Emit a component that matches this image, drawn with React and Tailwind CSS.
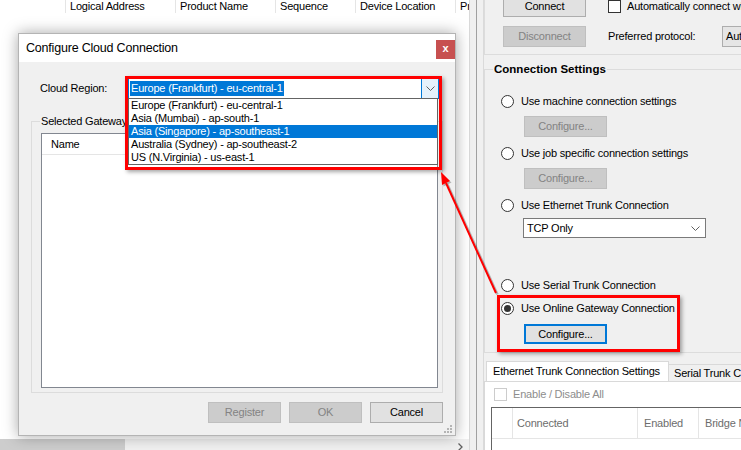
import React from 'react';

const Chevron = ({ color = '#606060' }) => (
  <svg width="9" height="5" viewBox="0 0 9 5">
    <path d="M0.5 0.5L4.5 4.5L8.5 0.5" fill="none" stroke={color} strokeWidth="1" />
  </svg>
);

const Radio = ({ checked }) => (
  <span className="flex h-[13px] w-[13px] shrink-0 items-center justify-center rounded-full border border-[#333333] bg-white">
    {checked && <span className="h-[7px] w-[7px] rounded-full bg-[#333333]" />}
  </span>
);

const RadioRow = ({ checked, label, className }) => (
  <div className={'flex h-[16px] items-center pl-[16px] ' + (className || '')}>
    <Radio checked={checked} />
    <span className="ml-[7px]">{label}</span>
  </div>
);

const WinButton = ({ children, kind, className }) => {
  let look = 'border border-[#adadad] bg-[#e1e1e1] text-black';
  if (kind === 'disabled') look = 'border border-[#bfbfbf] bg-[#cccccc] text-[#838383]';
  if (kind === 'focused') look = 'border-2 border-[#0078d7] bg-[#e1e1e1] text-black';
  return (
    <div className={'flex shrink-0 items-center justify-center ' + look + ' ' + (className || '')}>
      {children}
    </div>
  );
};

const regions = [
  'Europe (Frankfurt) - eu-central-1',
  'Asia (Mumbai) - ap-south-1',
  'Asia (Singapore) - ap-southeast-1',
  'Australia (Sydney) - ap-southeast-2',
  'US (N.Virginia) - us-east-1',
];

export default function App() {
  return (
    <div className="relative h-[450px] w-[741px] overflow-hidden bg-white font-['Liberation_Sans',Arial,sans-serif] text-[11px] tracking-[-0.2px] text-black">
      <div className="flex h-full">
        {/* device list behind the dialog */}
        <div className="flex w-[470px] shrink-0 flex-col overflow-hidden border-r border-[#d9d9d9]">
          <div className="flex h-[13px] leading-[13px]">
            <div className="h-full w-[66px] shrink-0 border-r border-[#e5e5e5]" />
            <div className="h-full w-[110px] shrink-0 border-r border-[#e5e5e5] pl-[4px]">Logical Address</div>
            <div className="h-full w-[100px] shrink-0 border-r border-[#e5e5e5] pl-[4px]">Product Name</div>
            <div className="h-full w-[80px] shrink-0 border-r border-[#e5e5e5] pl-[4px]">Sequence</div>
            <div className="h-full w-[100px] shrink-0 border-r border-[#e5e5e5] pl-[4px]">Device Location</div>
            <div className="h-full shrink-0 pl-[4px]">Pr</div>
          </div>
          <div className="flex-1" />
          <div className="flex h-[11px] bg-[#f0f0f0]">
            <div className="w-[125px] bg-[#cdcdcd]" />
            <div className="flex flex-1 justify-end pr-[6px] pt-[4px]">
              <svg width="5" height="8" viewBox="0 0 5 8">
                <path d="M0.5 0.5L4 4L0.5 7.5" fill="none" stroke="#606060" strokeWidth="1.3" />
              </svg>
            </div>
          </div>
        </div>

        {/* splitter */}
        <div className="flex w-[14px] shrink-0 bg-[#f0f0f0]">
          <div className="w-[6px]" />
          <div className="w-[1px] bg-[#a0a0a0]" />
          <div className="w-[6px]" />
          <div className="w-[1px] bg-[#dadada]" />
        </div>

        {/* connection panel */}
        <div className="flex min-w-0 flex-1 flex-col overflow-hidden bg-[#f0f0f0]">
          <div className="h-[55px] shrink-0 border-b border-l border-[#dcdcdc]">
            <div className="-mt-[4px] flex items-center">
              <WinButton className="ml-[18px] h-[21px] w-[83px]">Connect</WinButton>
              <span className="ml-[22px] h-[13px] w-[13px] shrink-0 border border-[#333333] bg-white" />
              <span className="ml-[6px] whitespace-nowrap">Automatically connect when</span>
            </div>
            <div className="mt-[9px] flex items-center">
              <WinButton kind="disabled" className="ml-[18px] h-[21px] w-[83px]">Disconnect</WinButton>
              <span className="ml-[22px] w-[114px] shrink-0 whitespace-nowrap">Preferred protocol:</span>
              <div className="flex h-[21px] w-[80px] shrink-0 items-center border border-[#adadad] bg-[#e5e5e5] pl-[3px]">Auto</div>
            </div>
          </div>

          <div className="relative mt-[14px] shrink-0 border-y border-l border-[#dcdcdc] pb-[8px] pt-[23px]">
            <span className="absolute -top-[8px] left-[8px] bg-[#f0f0f0] px-[1px] text-[11.5px] font-bold leading-[14px] tracking-normal">
              Connection Settings
            </span>
            <RadioRow label="Use machine connection settings" />
            <WinButton kind="disabled" className="ml-[39px] mt-[7px] h-[21px] w-[83px]">Configure...</WinButton>
            <RadioRow className="mt-[8px]" label="Use job specific connection settings" />
            <WinButton kind="disabled" className="ml-[39px] mt-[7px] h-[21px] w-[83px]">Configure...</WinButton>
            <RadioRow className="mt-[8px]" label="Use Ethernet Trunk Connection" />
            <div className="ml-[38px] mt-[5px] flex h-[20px] w-[183px] items-center justify-between border border-[#7a7a7a] bg-white pl-[3px] pr-[5px]">
              <span>TCP Only</span>
              <Chevron />
            </div>
            <RadioRow className="mt-[39px]" label="Use Serial Trunk Connection" />
            <RadioRow className="mt-[7px]" checked label="Use Online Gateway Connection" />
            <WinButton kind="focused" className="ml-[39px] mt-[8px] h-[20px] w-[83px]">Configure...</WinButton>
          </div>

          <div className="mt-[8px] flex shrink-0 items-end pl-[2px]">
            <div className="flex h-[20px] w-[183px] shrink-0 items-center border border-b-0 border-[#d9d9d9] bg-white pl-[6px] whitespace-nowrap">
              Ethernet Trunk Connection Settings
            </div>
            <div className="flex h-[17px] shrink-0 items-center border border-b-0 border-l-0 border-[#d9d9d9] bg-[#f0f0f0] pl-[5px] pr-[6px] whitespace-nowrap">
              Serial Trunk Connection Settings
            </div>
          </div>
          <div className="flex-1 border-l border-t border-[#d9d9d9] bg-white">
            <div className="mt-[4px] flex h-[16px] items-center pl-[9px]">
              <span className="h-[13px] w-[13px] shrink-0 border border-[#cccccc] bg-white" />
              <span className="ml-[6px] text-[#8d8d8d]">Enable / Disable All</span>
            </div>
            <div className="ml-[6px] mt-[5px] h-[60px] border-l border-t border-[#646464] bg-white">
              <div className="flex h-[31px] border-b border-[#e5e5e5] text-[#6d6d6d]">
                <div className="w-[21px] shrink-0 border-r border-[#e5e5e5]" />
                <div className="flex w-[125px] shrink-0 items-center border-r border-[#e5e5e5] pl-[4px]">Connected</div>
                <div className="flex w-[61px] shrink-0 items-center border-r border-[#e5e5e5] pl-[6px]">Enabled</div>
                <div className="flex shrink-0 items-center whitespace-nowrap pl-[6px]">Bridge Name</div>
              </div>
            </div>
          </div>
        </div>
      </div>

      {/* Configure Cloud Connection dialog */}
      <div className="absolute left-[18px] top-[33px] flex h-[403px] w-[438px] flex-col border border-[#b4b4b4] bg-[#f0f0f0] shadow-[0_0_14px_rgba(0,0,0,0.35)]">
        <div className="flex h-[28px] shrink-0 justify-between bg-white">
          <span className="self-center pl-[7px] text-[12.5px]">Configure Cloud Connection</span>
          <div className="mt-[6px] flex h-[19px] w-[19px] items-center justify-center bg-[#c75050] pb-[2px] text-[11px] font-bold leading-none text-white">
            x
          </div>
        </div>
        <div className="flex flex-1 flex-col">
          <div className="mt-[16px] flex items-center pl-[21px]">
            <span className="w-[88px] shrink-0">Cloud Region:</span>
            <div className="flex h-[21px] w-[311px] items-center border border-[#0078d7] bg-white">
              <div className="flex flex-1 items-center pl-[1px]">
                <span className="bg-[#0078d7] px-[1px] leading-[15px] text-white">Europe (Frankfurt) - eu-central-1</span>
              </div>
              <div className="flex h-full w-[17px] items-center justify-center border-l border-[#0078d7] bg-[#e5f1fb]">
                <Chevron />
              </div>
            </div>
          </div>

          <div className="relative ml-[12px] mt-[22px] h-[272px] w-[412px] border border-[#dcdcdc] pl-[9px] pt-[11px]">
            <span className="absolute -top-[8px] left-[8px] bg-[#f0f0f0] px-[1px] leading-[14px]">Selected Gateway</span>
            <div className="h-[255px] w-[397px] border border-[#828790] bg-white">
              <div className="flex h-[21px] items-center border-b border-[#e5e5e5] pl-[9px]">
                <span className="w-[90px] shrink-0">Name</span>
              </div>
            </div>
          </div>

          <div className="mt-[9px] flex justify-end gap-[8px] pr-[12px]">
            <WinButton kind="disabled" className="h-[21px] w-[73px]">Register</WinButton>
            <WinButton kind="disabled" className="h-[21px] w-[73px]">OK</WinButton>
            <WinButton className="h-[21px] w-[73px]">Cancel</WinButton>
          </div>
          <div className="mt-[2px] flex justify-end pr-[3px]">
            <svg width="8" height="8" viewBox="0 0 8 8" fill="#b4b4b4">
              <rect x="6" y="0" width="2" height="2" />
              <rect x="3" y="3" width="2" height="2" />
              <rect x="6" y="3" width="2" height="2" />
              <rect x="0" y="6" width="2" height="2" />
              <rect x="3" y="6" width="2" height="2" />
              <rect x="6" y="6" width="2" height="2" />
            </svg>
          </div>
        </div>
      </div>

      {/* open dropdown list */}
      <div className="absolute left-[128px] top-[98px] w-[310px] border border-[#646464] bg-white">
        {regions.map((r, i) => (
          <div
            key={r}
            className={
              i === 2
                ? 'h-[13px] bg-[#0078d7] pl-[2px] leading-[13px] text-white'
                : 'h-[13px] pl-[2px] leading-[13px]'
            }
          >
            {r}
          </div>
        ))}
      </div>

      {/* callout highlight boxes */}
      <div className="absolute left-[125px] top-[76px] h-[94px] w-[317px] border-[3px] border-[#ff0000] shadow-[2px_2px_4px_rgba(0,0,0,0.35)]" />
      <div className="absolute left-[497px] top-[295px] h-[57px] w-[183px] border-[3px] border-[#ff0000] shadow-[2px_2px_4px_rgba(0,0,0,0.35)]" />

      {/* arrow */}
      <svg className="pointer-events-none absolute left-0 top-0" width="741" height="450">
        <line x1="497.5" y1="294.5" x2="447.5" y2="184.5" stroke="rgba(0,0,0,0.25)" strokeWidth="2.5" />
        <polygon points="442.5,174.5 451.5,182.5 443.5,186.5" fill="rgba(0,0,0,0.25)" />
        <line x1="496" y1="293" x2="446" y2="183" stroke="#ff0000" strokeWidth="2" />
        <polygon points="441,172 450,181 442,185" fill="#ff0000" />
      </svg>
    </div>
  );
}
